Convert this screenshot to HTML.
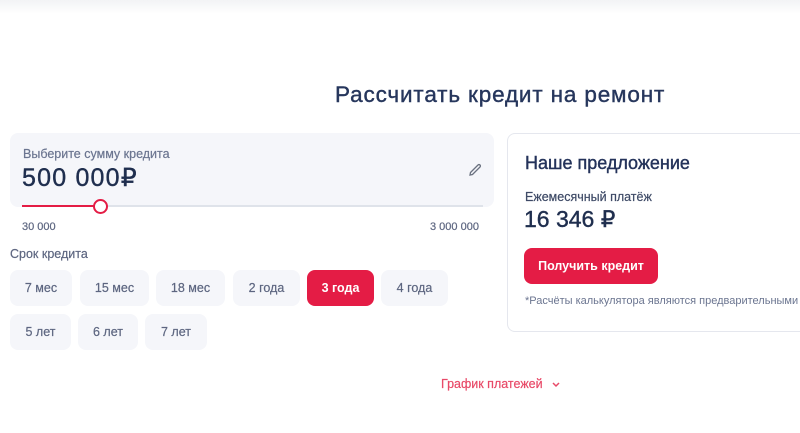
<!DOCTYPE html>
<html><head><meta charset="utf-8"><style>
*{margin:0;padding:0;box-sizing:border-box}
body{width:800px;height:433px;background:#fff;font-family:"Liberation Sans",sans-serif;position:relative;overflow:hidden;color:#24335a}
.topsh{position:absolute;left:0;top:0;width:800px;height:14px;background:linear-gradient(#f2f3f5,#fff)}
.a{position:absolute;white-space:nowrap}
.s{-webkit-text-stroke:0.4px currentColor}
.box{position:absolute;left:10px;top:133px;width:484px;height:74px;background:#f5f6fa;border-radius:8px}
.btn{position:absolute;height:36px;background:#f5f6fa;border-radius:8px;font-size:12.5px;color:#5d6680;display:flex;align-items:center;justify-content:center;-webkit-text-stroke:0.2px currentColor}
.on{background:#e41c45;color:#fff;font-weight:bold;-webkit-text-stroke:0}
.card{position:absolute;left:507px;top:133px;width:310px;height:199px;border:1px solid #e5e7ee;border-radius:8px}
</style></head><body>
<div class="topsh"></div>
<div class="a s" style="left:335px;top:82px;font-size:22.5px;letter-spacing:0.85px;color:#26365c">Рассчитать кредит на ремонт</div>
<div class="box"></div>
<div class="a s" style="left:23px;top:147px;font-size:12.5px;color:#6b7590;-webkit-text-stroke:0.2px">Выберите сумму кредита</div>
<div class="a s" style="left:22px;top:163px;font-size:25px;letter-spacing:1.2px;color:#1f2e4e">500 000₽</div>
<svg class="a" style="left:467px;top:162px" width="16" height="16" viewBox="0 0 16 16"><path d="M3 13 L3.5 10.5 L11 3 a1.4 1.4 0 0 1 2 2 L5.5 12.5 Z" fill="none" stroke="#6b7280" stroke-width="1.3"/></svg>
<div class="a" style="left:22px;top:205px;width:461px;height:2px;background:#dfe3ea"></div>
<div class="a" style="left:22px;top:205px;width:78px;height:2px;background:#e41c45"></div>
<div class="a" style="left:93px;top:199px;width:15px;height:15px;border:2.5px solid #e41c45;background:#fff;border-radius:50%"></div>
<div class="a" style="left:22px;top:221px;font-size:11px;color:#5d6680;-webkit-text-stroke:0.2px #5d6680">30 000</div>
<div class="a" style="left:430px;top:221px;font-size:11px;color:#5d6680;-webkit-text-stroke:0.2px #5d6680">3 000 000</div>
<div class="a" style="left:10px;top:247px;font-size:12.5px;color:#5d6680;-webkit-text-stroke:0.2px #5d6680">Срок кредита</div>
<div class="btn" style="left:10px;top:270px;width:62px">7 мес</div>
<div class="btn" style="left:80px;top:270px;width:69px">15 мес</div>
<div class="btn" style="left:156px;top:270px;width:69px">18 мес</div>
<div class="btn" style="left:233px;top:270px;width:67px">2 года</div>
<div class="btn on" style="left:307px;top:270px;width:67px">3 года</div>
<div class="btn" style="left:381px;top:270px;width:67px">4 года</div>
<div class="btn" style="left:10px;top:314px;width:61px">5 лет</div>
<div class="btn" style="left:78px;top:314px;width:60px">6 лет</div>
<div class="btn" style="left:145px;top:314px;width:62px">7 лет</div>
<div class="card"></div>
<div class="a s" style="left:525px;top:153px;font-size:18px;color:#24335a">Наше предложение</div>
<div class="a" style="left:525px;top:190px;font-size:12.5px;color:#3e4a66;-webkit-text-stroke:0.2px #3e4a66">Ежемесячный платёж</div>
<div class="a s" style="left:524px;top:206px;font-size:23px;color:#1f2e4e">16 346 ₽</div>
<div class="btn on" style="left:524px;top:248px;width:134px;height:36px;font-size:12.5px">Получить кредит</div>
<div class="a" style="left:525px;top:295px;font-size:11px;color:#6b7590">*Расчёты калькулятора являются предварительными</div>
<div class="a" style="left:441px;top:377px;font-size:12.5px;color:#e84a68;-webkit-text-stroke:0.2px #e84a68">График платежей</div>
<svg class="a" style="left:551px;top:381px" width="10" height="8" viewBox="0 0 10 8"><path d="M2 2 L5 5 L8 2" fill="none" stroke="#e84a68" stroke-width="1.5"/></svg>
</body></html>
